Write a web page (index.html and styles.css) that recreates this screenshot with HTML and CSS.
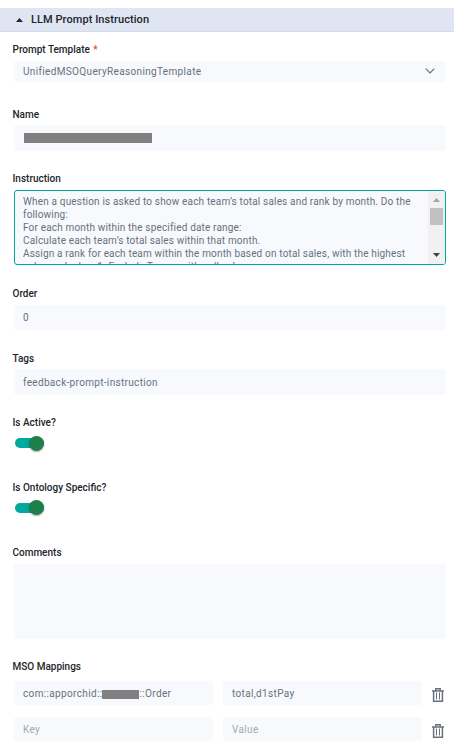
FILE: index.html
```html
<!DOCTYPE html>
<html lang="en">
<head>
<meta charset="utf-8">
<title>LLM Prompt Instruction</title>
<link rel="stylesheet" href="styles.css">
</head>
<body>
<header class="panel-header">
  <svg class="caret" width="7" height="4" viewBox="0 0 7 4"><path d="M0 4 3.5 0 7 4z" fill="#212529"/></svg>
  <h1 class="title">LLM Prompt Instruction</h1>
</header>
<main class="form">
  <section class="group template">
    <div class="label">Prompt Template <span class="required">*</span></div>
    <div class="control select"><span class="template-text">UnifiedMSOQueryReasoningTemplate</span>
      <svg width="10" height="6" viewBox="0 0 10 6"><path d="M.7.7 5 5 9.3.7" fill="none" stroke="#5f6b7a" stroke-width="1.1"/></svg>
    </div>
  </section>
  <section class="group name">
    <div class="label">Name</div>
    <div class="control"><span class="redacted"></span></div>
  </section>
  <section class="group instruction">
    <div class="label">Instruction</div>
    <div class="control textarea">
      <div class="lines">
        <div>When a question is asked to show each team’s total sales and rank by month. Do the</div>
        <div>following:</div>
        <div>For each month within the specified date range:</div>
        <div>Calculate each team’s total sales within that month.</div>
        <div>Assign a rank for each team within the month based on total sales, with the highest</div>
        <div>sales ranked as 1. Exclude Teams with null values.</div>
      </div>
      <div class="scrollbar">
        <svg width="7" height="4" viewBox="0 0 7 4"><path d="M0 4 3.5 0 7 4z" fill="#a3a3a3"/></svg>
        <span class="thumb"></span>
        <svg class="down" width="7" height="4" viewBox="0 0 7 4"><path d="M0 0 3.5 4 7 0z" fill="#404040"/></svg>
      </div>
    </div>
  </section>
  <section class="group order">
    <div class="label">Order</div>
    <div class="control">0</div>
  </section>
  <section class="group tags">
    <div class="label">Tags</div>
    <div class="control">feedback-prompt-instruction</div>
  </section>
  <section class="group active">
    <div class="label">Is Active?</div>
    <div class="toggle"><span class="knob"></span></div>
  </section>
  <section class="group ontology">
    <div class="label">Is Ontology Specific?</div>
    <div class="toggle"><span class="knob"></span></div>
  </section>
  <section class="group comments">
    <div class="label">Comments</div>
    <div class="control"></div>
  </section>
  <section class="group mappings">
    <div class="label">MSO Mappings</div>
    <div class="row">
      <div class="control">com::apporchid::<span class="redacted-inline"></span>::Order</div>
      <div class="control">total,d1stPay</div>
      <svg class="trash" width="12" height="14" viewBox="0 0 12 14" fill="none" stroke="#68727e"><path d="M0 3H12M3.8 2.8V.8H8.2V2.8M1.6 3V13.3H10.4V3" stroke-width="1.5"/><path d="M4.5 4.5V11.5M7.5 4.5V11.5"/></svg>
    </div>
    <div class="row">
      <div class="control placeholder">Key</div>
      <div class="control placeholder">Value</div>
      <svg class="trash" width="12" height="14" viewBox="0 0 12 14" fill="none" stroke="#68727e"><path d="M0 3H12M3.8 2.8V.8H8.2V2.8M1.6 3V13.3H10.4V3" stroke-width="1.5"/><path d="M4.5 4.5V11.5M7.5 4.5V11.5"/></svg>
    </div>
  </section>
</main>
</body>
</html>
```
FILE: styles.css
```css
* { box-sizing: border-box; }
body { margin: 0; padding-top: 8px; background: #fff; color: #212529; font-family: Roboto, sans-serif; font-size: 10px; }
.panel-header { display: flex; align-items: center; height: 24px; padding: 1px 0 0 16px; gap: 8px; background: #dfe5f3; border-bottom: 1px solid #d5dae4; }
.title { margin: 0; font-size: 11px; font-weight: 500; line-height: 14px; letter-spacing: .07px; }
.form { padding: 11px 8px 0 12px; }
.label { height: 14px; padding-left: .5px; line-height: 14px; font-weight: 500; letter-spacing: 0; white-space: nowrap; }
.required { margin-left: 1px; color: #f44336; }
.control { display: flex; align-items: center; height: 26px; margin-left: 2px; padding: 0 9px; background: #f8f9fd; border-radius: 3px; color: #66717e; letter-spacing: .35px; white-space: nowrap; }
.template .control { height: 21px; margin-top: 4px; }
.select { justify-content: space-between; }
.select svg { margin: -2px 2px 0 0; }
.name { margin-top: 26px; }
.name .control { margin-top: 3px; }
.redacted { width: 128px; height: 10px; background: #808080; margin: -1px 0 0 .5px; }
.instruction { margin-top: 21px; }
.instruction .control { height: 75px; margin-top: 4px; padding: 0 0 0 8px; border: 1px solid #00a99d; align-items: flex-start; justify-content: space-between; overflow: hidden; letter-spacing: .17px; }
.lines { height: 73px; padding-top: 4px; line-height: 13px; overflow: hidden; }
.scrollbar { display: flex; flex-direction: column; align-items: center; width: 17px; height: 73px; padding: 7px 0; background: #f1f1f1; }
.thumb { width: 13px; height: 17px; margin-top: 6px; background: #c1c1c1; }
.down { margin-top: auto; }
.order { margin-top: 22px; }
.order .control { height: 25px; margin-top: 4px; }
.tags { margin-top: 22px; }
.tags .control { margin-top: 3px; letter-spacing: .32px; }
.active { margin-top: 21px; }
.toggle { display: flex; align-items: center; justify-content: flex-end; width: 29px; height: 10px; margin: 8px 0 0 3px; border-radius: 5px; background: #00a99d; }
.knob { flex: none; width: 15px; height: 15px; border-radius: 50%; background: #1f7f4b; box-shadow: 0 1px 2px #0005; }
.ontology { margin-top: 33px; }
.ontology .toggle { margin-top: 7.5px; }
.comments { margin-top: 33.5px; }
.comments .control { height: 75px; margin-top: 4px; }
.mappings { margin-top: 21px; }
.row { display: grid; grid-template-columns: 199px 199px 12px; column-gap: 10px; align-items: center; height: 24px; margin: 7px 0 0 2px; }
.row + .row { margin-top: 12px; }
.row .control { height: 24px; margin: 0; }
.row .placeholder { color: #a5a8ad; }
.redacted-inline { width: 37px; height: 9px; margin-top: 3px; background: #808080; }
.trash { margin-top: 4px; }
```
